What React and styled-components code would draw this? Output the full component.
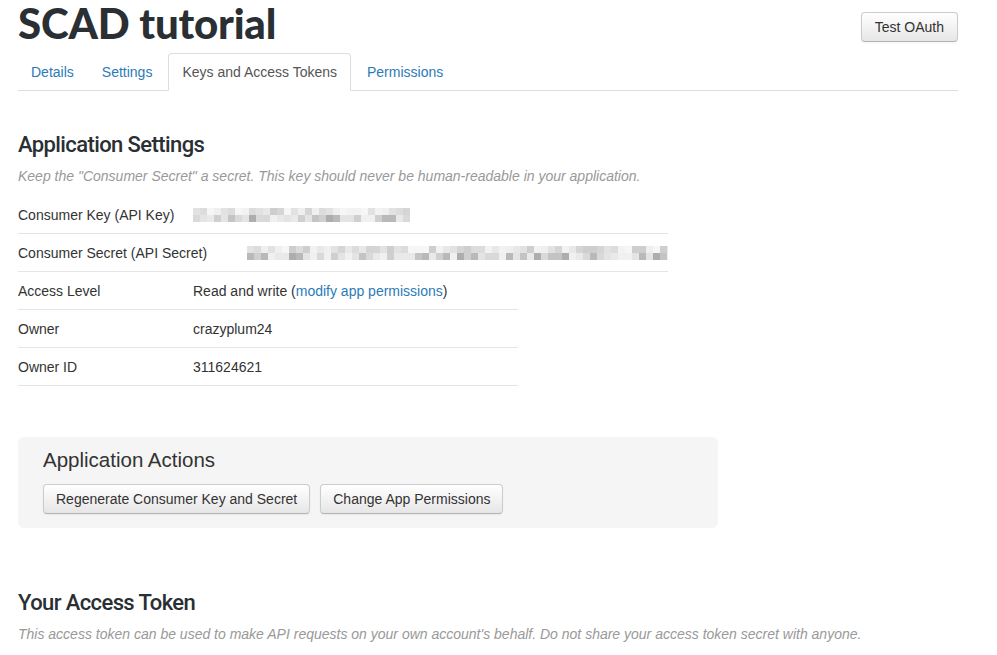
import React from "react";
import styled, { createGlobalStyle } from "styled-components";

const GlobalStyle = createGlobalStyle`
  body {
    margin: 0;
    background: #fff;
    font-family: "Liberation Sans", Arial, sans-serif;
    color: #333;
  }
`;

// pixelated blur standing in for the hidden keys
const shades = ["#f0f0f0", "#e4e4e4", "#d9d9d9", "#cfcfcf", "#c4c4c4", "#b9b9b9", "#adadad", "#e9e9e9"];
const makeCells = (count, seed) => {
  const cells = [];
  let s = seed;
  for (let i = 0; i < count * 2; i++) {
    s = (s * 9301 + 49297) % 233280;
    cells.push(shades[Math.floor((s / 233280) * shades.length)]);
  }
  return cells;
};

const Blurred = ({ width, seed }) => {
  const cols = Math.round(width / 7);
  const cells = makeCells(cols, seed);
  return (
    <svg width={width} height={14} style={{ display: "block" }}>
      {cells.map((c, i) => (
        <rect
          key={i}
          x={(i % cols) * 7}
          y={i < cols ? 0 : 7}
          width={7}
          height={7}
          fill={c}
          opacity={i < cols ? 0.6 : 1}
        />
      ))}
    </svg>
  );
};

const App = () => {
  return (
    <Page>
      <GlobalStyle />
      <Header>
        <Title>SCAD tutorial</Title>
        <Button $pad={13}>Test OAuth</Button>
      </Header>
      <Tabs>
        <Tab>Details</Tab>
        <Tab>Settings</Tab>
        <Tab $active>Keys and Access Tokens</Tab>
        <Tab>Permissions</Tab>
      </Tabs>

      <Section>
        <Heading>Application Settings</Heading>
        <Note>Keep the "Consumer Secret" a secret. This key should never be human-readable in your application.</Note>
        <Rows>
          <Row $width={650}>
            <Label $width={175}>Consumer Key (API Key)</Label>
            <Blurred width={219} seed={7} />
          </Row>
          <Row $width={650}>
            <Label $width={229}>Consumer Secret (API Secret)</Label>
            <Blurred width={427} seed={31} />
          </Row>
          <Row $width={500}>
            <Label $width={175}>Access Level</Label>
            <Value>
              Read and write (<Link>modify app permissions</Link>)
            </Value>
          </Row>
          <Row $width={500}>
            <Label $width={175}>Owner</Label>
            <Value>crazyplum24</Value>
          </Row>
          <Row $width={500}>
            <Label $width={175}>Owner ID</Label>
            <Value>311624621</Value>
          </Row>
        </Rows>
      </Section>

      <Panel>
        <PanelTitle>Application Actions</PanelTitle>
        <ButtonRow>
          <Button>Regenerate Consumer Key and Secret</Button>
          <Button>Change App Permissions</Button>
        </ButtonRow>
      </Panel>

      <Section $top={61}>
        <Heading>Your Access Token</Heading>
        <Note>This access token can be used to make API requests on your own account's behalf. Do not share your access token secret with anyone.</Note>
      </Section>
    </Page>
  );
};

export default App;

const Page = styled.div`
  width: 940px;
  padding: 0 0 0 18px;
`;

const Header = styled.div`
  display: flex;
  justify-content: space-between;
  align-items: flex-start;
  height: 53px;
`;

const Title = styled.h1`
  margin: 2px 0 0 0;
  font-family: Lato, "Open Sans", sans-serif;
  font-weight: 900;
  font-size: 42px;
  line-height: 42px;
  color: #292f33;
  letter-spacing: -0.2px;
`;

const Button = styled.button`
  margin-top: 12px;
  height: 30px;
  padding: 0 ${(p) => p.$pad || 12}px;
  font-family: "Liberation Sans", Arial, sans-serif;
  font-size: 14px;
  color: #333;
  background: linear-gradient(#ffffff, #e6e6e6);
  border: 1px solid #ccc;
  border-bottom-color: #b3b3b3;
  border-radius: 4px;
  box-shadow: inset 0 1px 0 rgba(255, 255, 255, 0.2), 0 1px 2px rgba(0, 0, 0, 0.05);
  cursor: pointer;
`;

const Tabs = styled.ul`
  display: flex;
  margin: 0;
  padding: 0;
  list-style: none;
  border-bottom: 1px solid #ddd;
  height: 37px;
`;

const Tab = styled.li`
  box-sizing: border-box;
  height: 38px;
  padding: 0 ${(p) => (p.$active ? 13 : 12)}px;
  margin: 0 ${(p) => (p.$active ? 3 : 2)}px 0 ${(p) => (p.$active ? 1 : 0)}px;
  line-height: 36px;
  font-size: 14px;
  color: ${(p) => (p.$active ? "#555" : "#2b7bb9")};
  background: ${(p) => (p.$active ? "#fff" : "transparent")};
  border: 1px solid ${(p) => (p.$active ? "#ddd" : "transparent")};
  border-bottom: ${(p) => (p.$active ? "1px solid #fff" : "none")};
  border-radius: 4px 4px 0 0;
  cursor: pointer;
`;

const Section = styled.section`
  margin-top: ${(p) => p.$top || 40}px;
`;

const Heading = styled.h2`
  margin: 0;
  font-family: Roboto, "Liberation Sans", sans-serif;
  font-weight: 500;
  font-size: 22px;
  line-height: 28px;
  letter-spacing: -0.6px;
  color: #292f33;
`;

const Note = styled.p`
  margin: 6px 0 0 0;
  font-size: 14px;
  font-style: italic;
  line-height: 22px;
  color: #999;
`;

const Rows = styled.div`
  margin-top: 9px;
`;

const Row = styled.div`
  display: flex;
  align-items: center;
  width: ${(p) => p.$width}px;
  height: 37px;
  border-bottom: 1px solid #e5e5e5;
  font-size: 14px;
`;

const Label = styled.div`
  width: ${(p) => p.$width}px;
  flex: none;
`;

const Value = styled.div`
  color: #333;
`;

const Link = styled.a`
  color: #2b7bb9;
  cursor: pointer;
`;

const Panel = styled.div`
  width: 700px;
  box-sizing: border-box;
  margin-top: 51px;
  padding: 10px 25px 14px;
  background: #f5f5f5;
  border-radius: 6px;
`;

const PanelTitle = styled.h3`
  margin: 0;
  font-family: "Liberation Sans", Arial, sans-serif;
  font-weight: 400;
  font-size: 20.5px;
  line-height: 26px;
  color: #333;
`;

const ButtonRow = styled.div`
  display: flex;
  gap: 10px;
  margin-top: -1px;
`;
